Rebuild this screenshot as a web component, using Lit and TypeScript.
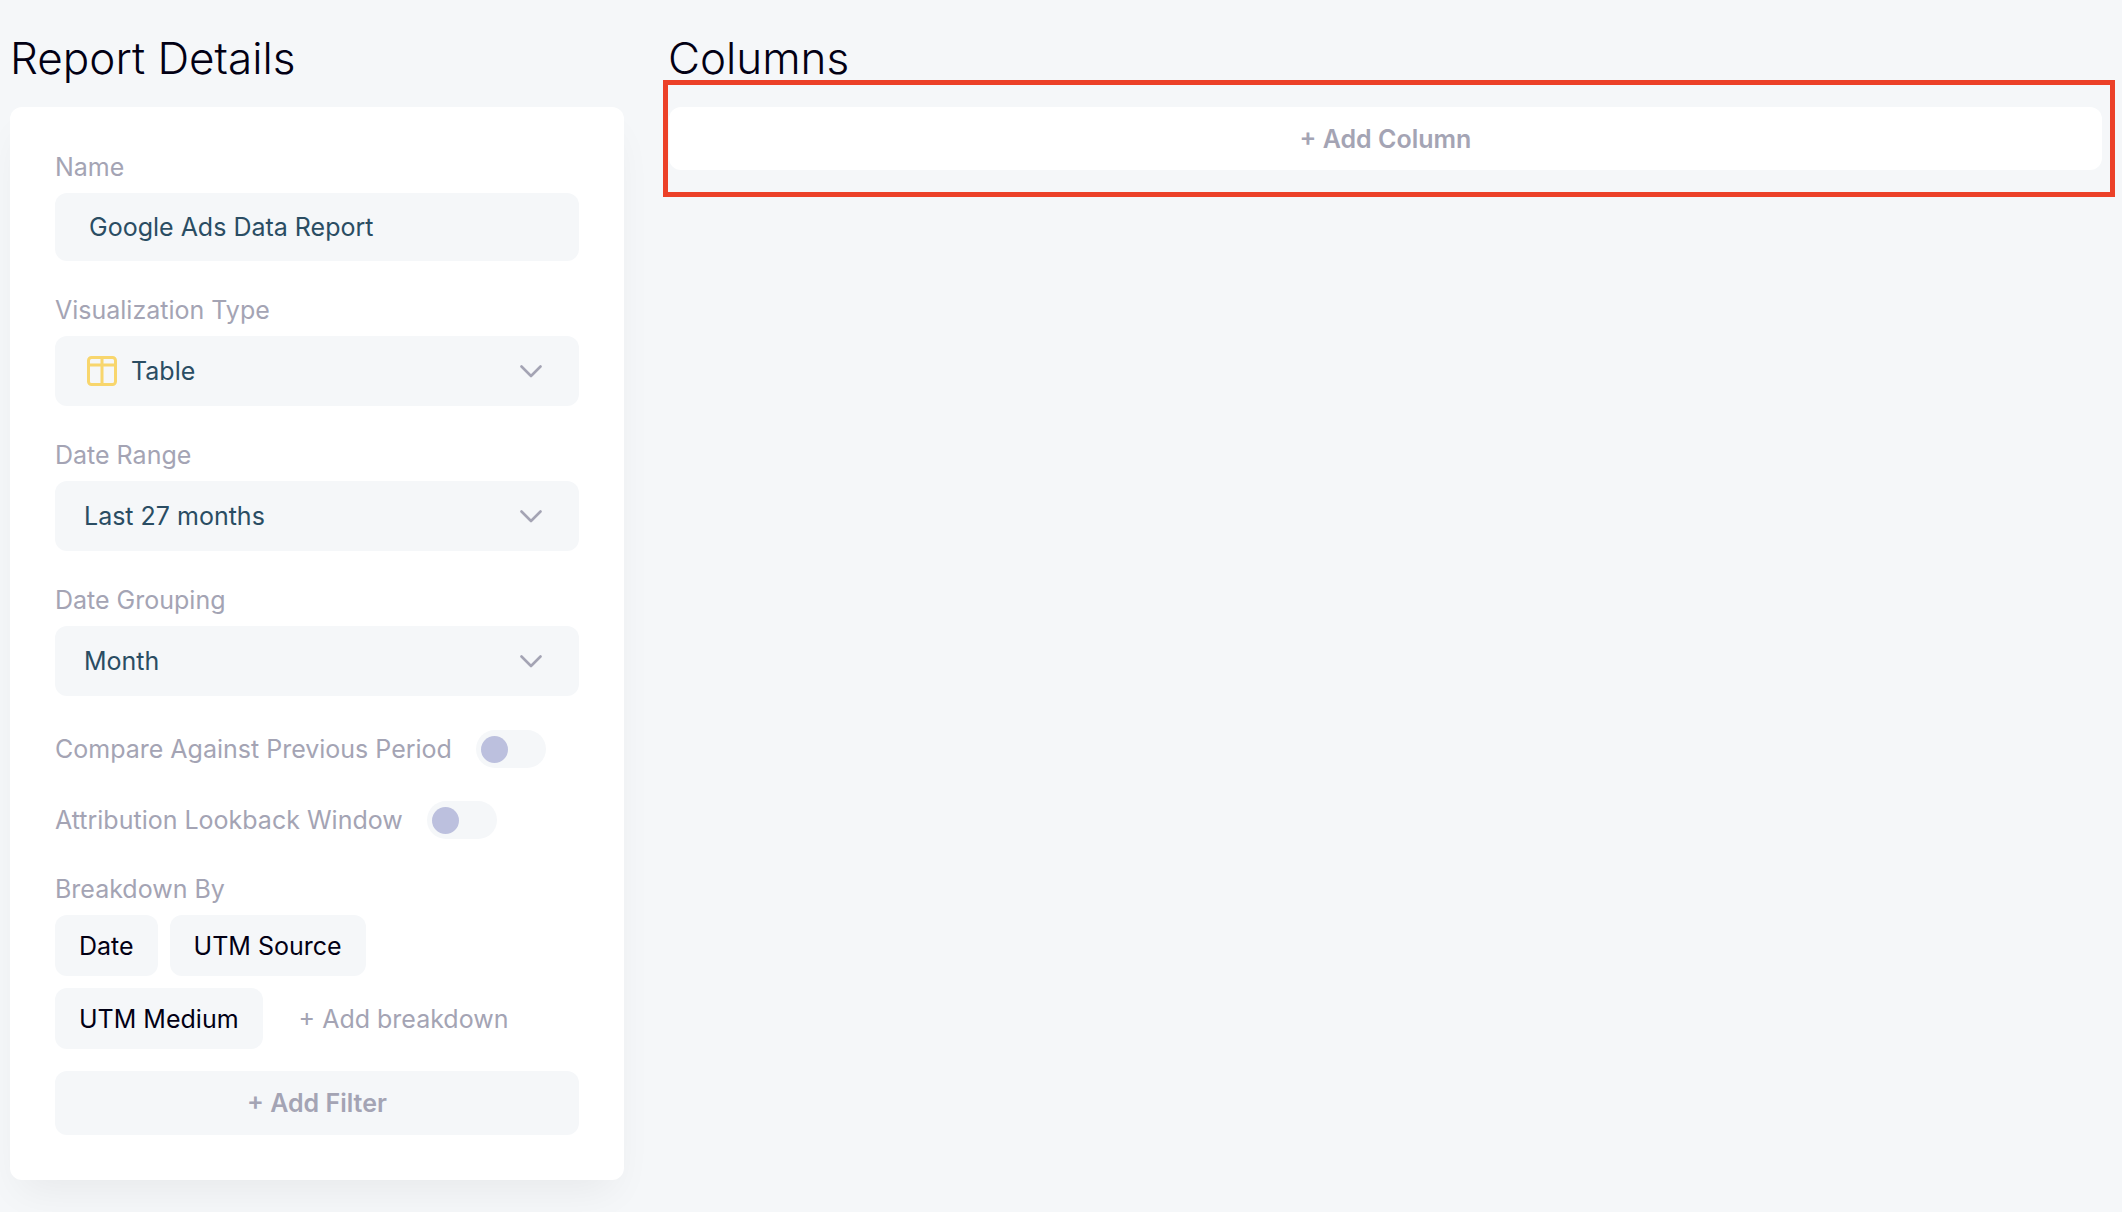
import { LitElement, html, css, svg, nothing } from "lit";
import { customElement, property, state } from "lit/decorators.js";

const tableIcon = html`<svg class="kind" viewBox="0 0 30 30" width="30" height="30" aria-hidden="true">
  <g fill="none" stroke="#f8d66d" stroke-width="3">
    <rect x="1.5" y="1.5" width="27" height="27" rx="3" />
    <path d="M1.5 9H28.5M15 1.5V28.5" />
  </g>
</svg>`;

const chevron = svg`<path d="M1.5 1.5L11 11L20.5 1.5" fill="none" stroke="#a4a4b4" stroke-width="2.6" stroke-linecap="round" stroke-linejoin="round" />`;

@customElement("select-field")
export class SelectField extends LitElement {
  @property() label = "";
  @property({ attribute: false }) options: string[] = [];
  @property({ attribute: false }) icon: unknown = nothing;

  static styles = css`
    :host {
      display: block;
    }
    .label {
      display: block;
      margin-bottom: 10px;
      line-height: 32px;
      color: #a4a4b4;
    }
    .box {
      display: grid;
      align-items: center;
      border-radius: 12px;
      background: #f5f7f9;
    }
    .box > * {
      grid-area: 1 / 1;
    }
    .kind {
      margin-left: 32px;
      pointer-events: none;
    }
    .chevron {
      justify-self: end;
      margin-right: 37px;
      pointer-events: none;
    }
    select {
      width: 100%;
      height: 70px;
      padding: 0 70px 0 29px;
      border: 0;
      border-radius: 12px;
      background: transparent;
      color: #2a4d63;
      font: inherit;
      appearance: none;
    }
    .with-icon select {
      padding-left: 76px;
    }
  `;

  render() {
    return html`
      <label class="label" for="control">${this.label}</label>
      <div class="box ${this.icon === nothing ? "" : "with-icon"}">
        <select id="control">
          ${this.options.map((o) => html`<option>${o}</option>`)}
        </select>
        ${this.icon}
        <svg class="chevron" viewBox="0 0 22 13" width="22" height="13" aria-hidden="true">${chevron}</svg>
      </div>
    `;
  }
}

@customElement("toggle-field")
export class ToggleField extends LitElement {
  @property() label = "";

  static styles = css`
    :host {
      display: block;
    }
    label {
      display: flex;
      align-items: center;
      gap: 24px;
      line-height: 32px;
      color: #a4a4b4;
    }
    input {
      display: flex;
      align-items: center;
      width: 70px;
      height: 38px;
      margin: 0;
      padding: 0 5px;
      border-radius: 19px;
      background: #f5f7f9;
      appearance: none;
    }
    input::before {
      content: "";
      width: 27px;
      height: 27px;
      border-radius: 50%;
      background: #bcc0de;
    }
    input:checked {
      justify-content: flex-end;
    }
  `;

  render() {
    return html`<label>${this.label}<input type="checkbox" role="switch" /></label>`;
  }
}

@customElement("app-root")
export class AppRoot extends LitElement {
  @state() private breakdowns = ["Date", "UTM Source", "UTM Medium"];

  static styles = css`
    :host {
      display: block;
      box-sizing: border-box;
      min-height: 100vh;
      padding: 32px 7px 32px 10px;
      background: #f5f7f9;
      color: #020014;
      font-family: Inter, "Liberation Sans", sans-serif;
      font-size: 25px;
    }
    * {
      box-sizing: border-box;
    }
    .page {
      display: grid;
      grid-template-columns: minmax(0, 14fr) minmax(0, 33fr);
      column-gap: 44px;
      align-items: start;
    }
    h1 {
      margin: 0;
      font-size: 44px;
      font-weight: 300;
      line-height: 52px;
    }
    .card {
      display: flex;
      flex-direction: column;
      gap: 33px;
      margin-top: 23px;
      padding: 44px 45px 45px;
      border-radius: 12px;
      background: #fff;
      box-shadow: 0 20px 40px -10px rgba(0, 0, 0, 0.06);
    }
    .toggles {
      display: flex;
      flex-direction: column;
      gap: 33px;
      margin: 1px 0;
    }
    .label {
      display: block;
      margin-bottom: 10px;
      line-height: 32px;
      color: #a4a4b4;
    }
    .name {
      display: block;
      width: 100%;
      height: 68px;
      padding: 0 34px;
      border: 0;
      border-radius: 12px;
      background: #f5f7f9;
      color: #2a4d63;
      font: inherit;
    }
    .chips {
      display: flex;
      flex-wrap: wrap;
      gap: 12px;
    }
    button {
      border: 0;
      border-radius: 12px;
      background: #f5f7f9;
      color: inherit;
      font: inherit;
    }
    .chip {
      height: 61px;
      padding: 0 24px;
    }
    .add-breakdown {
      height: 61px;
      padding: 0 24px;
      background: none;
      color: #a4a4b4;
    }
    .add {
      width: 100%;
      height: 64px;
      color: #a4a4b4;
      font-weight: 600;
    }
    .filter {
      margin-top: 22px;
    }
    .highlight {
      margin: -4px 0 0 -5px;
      padding: 22px 8px 22px 1px;
      border: 5px solid #ec4128;
    }
    .column {
      display: block;
      height: 63px;
      background: #fff;
    }
  `;

  render() {
    return html`
      <main class="page">
        <section>
          <h1>Report Details</h1>
          <form class="card">
            <div>
              <label class="label" for="name">Name</label>
              <input class="name" id="name" type="text" value="Google Ads Data Report" />
            </div>
            <select-field label="Visualization Type" .options=${["Table"]} .icon=${tableIcon}></select-field>
            <select-field label="Date Range" .options=${["Last 27 months"]}></select-field>
            <select-field label="Date Grouping" .options=${["Month"]}></select-field>
            <div class="toggles">
              <toggle-field label="Compare Against Previous Period"></toggle-field>
              <toggle-field label="Attribution Lookback Window"></toggle-field>
            </div>
            <div>
              <span class="label">Breakdown By</span>
              <div class="chips">
                ${this.breakdowns.map((b) => html`<button class="chip" type="button">${b}</button>`)}
                <button class="add-breakdown" type="button">+ Add breakdown</button>
              </div>
              <button class="add filter" type="button">+ Add Filter</button>
            </div>
          </form>
        </section>
        <section>
          <h1>Columns</h1>
          <div class="highlight">
            <button class="add column" type="button">+ Add Column</button>
          </div>
        </section>
      </main>
    `;
  }
}
